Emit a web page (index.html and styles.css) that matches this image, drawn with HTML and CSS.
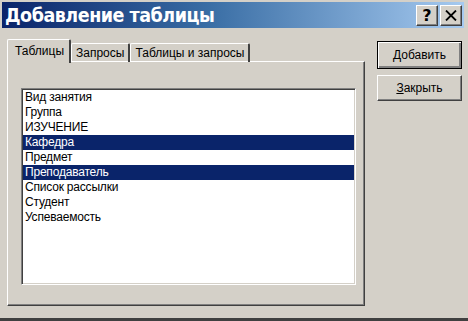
FILE: index.html
```html
<!DOCTYPE html>
<html lang="ru">
<head>
    <meta charset="UTF-8">
    <title>Добавление таблицы</title>
    <link rel="stylesheet" href="styles.css">
</head>
<body>
    <div class="window">
        <div class="title-bar">
            <span class="title-text">Добавление таблицы</span>
            <div class="title-buttons">
                <span class="title-btn">?</span>
                <span class="title-btn close">
                    <svg width="12" height="11" viewBox="0 0 12 11">
                        <path d="M1 0.5 L11 10.5 M11 0.5 L1 10.5" stroke="#000" stroke-width="1.8" fill="none"/>
                    </svg>
                </span>
            </div>
        </div>

        <div class="dialog-body">
            <div class="tab-area">
                <div class="tabs">
                    <span class="tab active">Таблицы</span>
                    <span class="tab">Запросы</span>
                    <span class="tab">Таблицы и запросы</span>
                </div>
                <div class="tab-panel">
                    <ul class="listbox">
                        <li>Вид занятия</li>
                        <li>Группа</li>
                        <li>ИЗУЧЕНИЕ</li>
                        <li class="selected">Кафедра</li>
                        <li>Предмет</li>
                        <li class="selected">Преподаватель</li>
                        <li>Список рассылки</li>
                        <li>Студент</li>
                        <li>Успеваемость</li>
                    </ul>
                </div>
            </div>

            <div class="button-column">
                <button class="btn default"><u>Д</u>обавить</button>
                <button class="btn"><u>З</u>акрыть</button>
            </div>
        </div>
    </div>
</body>
</html>
```

FILE: styles.css
```css
:root {
    --face: #d4d0c8;
    --shadow: #808080;
    --dark: #404040;
    --light: #ffffff;
    --navy: #0a246a;
}

body {
    margin: 0;
    background: var(--face);
    font-family: "Liberation Sans", Arial, sans-serif;
    font-size: 12px;
    color: #000;
}

.window {
    width: 468px;
    height: 321px;
    box-sizing: border-box;
    padding: 2px 4px 0 2px;
    background: var(--face);
    border-bottom: 3px solid var(--dark);
    overflow: hidden;
}

.title-bar {
    height: 26px;
    display: flex;
    align-items: center;
    justify-content: space-between;
    padding: 0 2px 0 3px;
    background: linear-gradient(to right, var(--navy) 0%, #3a6ea5 45%, #a6caf0 100%);
}

.title-text {
    color: #fff;
    font-family: "DejaVu Sans Condensed", "DejaVu Sans", sans-serif;
    font-stretch: condensed;
    font-weight: bold;
    font-size: 19.5px;
    letter-spacing: -0.5px;
}

.title-buttons {
    display: flex;
    gap: 2px;
}

.title-btn {
    width: 22px;
    height: 21px;
    box-sizing: border-box;
    display: flex;
    align-items: center;
    justify-content: center;
    background: var(--face);
    border-top: 1px solid var(--light);
    border-left: 1px solid var(--light);
    border-right: 1px solid var(--dark);
    border-bottom: 1px solid var(--dark);
    box-shadow: inset -1px -1px 0 var(--shadow);
    font-family: "DejaVu Sans", sans-serif;
    font-weight: bold;
    font-size: 16px;
}

.dialog-body {
    display: flex;
    padding: 11px 0 0 5px;
}

.tab-area {
    width: 358px;
}

.tabs {
    display: flex;
    align-items: flex-end;
    height: 22px;
}

.tab {
    height: 19px;
    box-sizing: border-box;
    padding: 1px 4px 0 4px;
    border-top: 1px solid var(--light);
    border-left: 1px solid var(--light);
    border-right: 2px solid var(--dark);
    border-radius: 2px 2px 0 0;
    line-height: 16px;
    margin-bottom: -1px;
}

.tab.active {
    height: 24px;
    padding: 3px 5px 0 7px;
    position: relative;
    z-index: 1;
    background: var(--face);
    margin-bottom: -2px;
}

.tab-panel {
    height: 245px;
    box-sizing: border-box;
    padding: 26px 8px 0 13px;
    border-top: 1px solid var(--light);
    border-left: 1px solid var(--light);
    border-right: 1px solid var(--dark);
    border-bottom: 1px solid var(--dark);
    box-shadow: inset -1px -1px 0 var(--shadow);
}

.listbox {
    list-style: none;
    margin: 0;
    height: 197px;
    box-sizing: border-box;
    padding: 1px 0 0 0;
    background: #fff;
    border-top: 1px solid var(--shadow);
    border-left: 1px solid var(--shadow);
    border-right: 1px solid var(--light);
    border-bottom: 1px solid var(--light);
    box-shadow: inset 1px 1px 0 var(--dark), inset -1px -1px 0 var(--face);
}

.listbox li {
    height: 15px;
    line-height: 15px;
    padding-left: 2px;
    margin: 0 1px;
    white-space: nowrap;
    letter-spacing: -0.2px;
}

.listbox li.selected {
    background: var(--navy);
    color: #fff;
}

.button-column {
    display: flex;
    flex-direction: column;
    gap: 6px;
    margin-left: 12px;
    padding-top: 2px;
}

.btn {
    width: 85px;
    height: 26px;
    font-family: "Liberation Sans", Arial, sans-serif;
    font-size: 12px;
    color: #000;
    background: var(--face);
    border-top: 1px solid var(--light);
    border-left: 1px solid var(--light);
    border-right: 1px solid var(--dark);
    border-bottom: 1px solid var(--dark);
    box-shadow: inset -1px -1px 0 var(--shadow);
    padding: 0;
}

.btn.default {
    height: 28px;
    border: 1px solid #000;
    box-shadow: inset 1px 1px 0 var(--light), inset -2px -2px 0 var(--shadow), inset -1px -1px 0 var(--dark);
}
```
